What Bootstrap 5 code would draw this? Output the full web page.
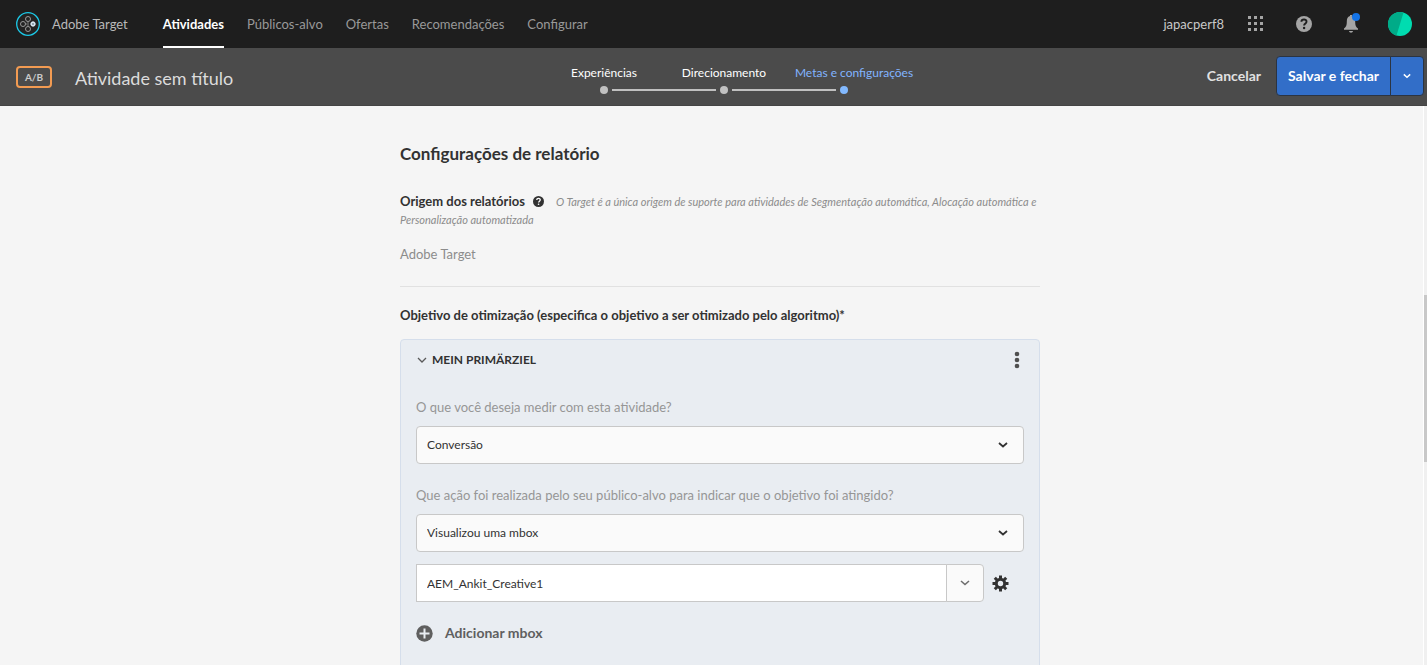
<!DOCTYPE html>
<html lang="pt-BR">
<head>
<meta charset="utf-8">
<meta name="viewport" content="width=device-width, initial-scale=1">
<title>Adobe Target</title>
<link href="https://cdn.jsdelivr.net/npm/bootstrap@5.3.0/dist/css/bootstrap.min.css" rel="stylesheet">
<style>
body{font-family:Lato,"Liberation Sans",sans-serif;font-size:13px;line-height:18px;color:#323232;background:#f5f5f5}
a{text-decoration:none}
.topbar{height:48px;background:#1e1e1e;color:#c8c8c8;padding:0 15px 0 16px;font-size:13px}
.topbar .brand{color:#b9b9b9;margin:0 35px 0 12px}
.topnav{gap:23px}
.topnav .nav-link{padding:0;color:#999;line-height:48px;height:48px}
.topnav .nav-link.active{color:#fff;font-weight:700;box-shadow:inset 0 -2px #fff}
.tools{gap:24px}
.tools .bell{margin-left:7px}
.tools .help{margin-left:8px}
.plain{border:0;background:none;padding:0;color:inherit;display:inline-flex;align-items:center}
.actionbar{height:58px;background:#4b4b4b;border-bottom:1px solid #444;display:grid;grid-template-columns:1fr auto 1fr;align-items:center;padding:0 3px 2px 16px}
.activity{padding-top:2px}
.ab-tag{width:36px;height:22px;border:2px solid #f29b52;border-radius:4px;font-size:10px;font-weight:700;color:#ccc;line-height:18px;text-align:center}
.title-text{font-size:18px;line-height:24px;font-weight:400;color:#dcdcdc;margin:2px 0 0 23px}
.steps{display:grid;grid-template-columns:repeat(3,120px);margin:6px 0 0 8px;padding:0;list-style:none}
.steps li{display:flex;flex-direction:column;align-items:center;white-space:nowrap;position:relative;gap:4px}
.steps a{color:#fff;font-size:12px}
.steps i{width:8px;height:8px;border-radius:50%;background:#c0c0c0}
.steps li+li::before{content:"";position:absolute;left:-52px;width:104px;bottom:3px;height:2px;background:#c0c0c0}
.steps .current a{color:#82b4ff;margin-left:20px}
.steps .current i{background:#82b9ff}
.cancel{font-size:14px;font-weight:700;color:#e1e1e1;margin-right:15px}
.btn-save{--bs-btn-bg:#326ec8;--bs-btn-color:#fff;--bs-btn-border-color:#2b3442;--bs-btn-hover-bg:#2a62b8;--bs-btn-hover-color:#fff;height:40px;font-size:14px;font-weight:700;padding:0 11px;border-radius:4px}
.btn-save.arrow{width:34px;padding:0}
.page{width:640px;max-width:100%;margin:0 auto;padding-top:36px}
.pane{padding-left:17px}
h1{font-size:17px;line-height:24px;font-weight:700;margin:0}
.source{margin-top:26px;font-size:11px;font-style:italic;color:#8c8c8c}
.source h2{display:inline;font-style:normal;color:#323232}
.source svg{margin:0 12px 0 8px;vertical-align:-1px}
.source h2,.goal-title{font-size:13px;line-height:18px;font-weight:700;margin:0}
.muted{color:#8c8c8c}
.rule{border-top:1px solid #e1e1e1;margin:23px 0 19px}
.goal{background:#e9edf2;border:1px solid #d5deeb;border-radius:4px;margin-top:15px;padding:0 15px 80px}
.goal-head{height:40px}
.goal-head .plain{font-size:12px;font-weight:700;color:#323232;gap:5px}
.goal-head .toggle{padding-left:1px}
.goal label{color:#969696;display:block;margin-bottom:10px}
.goal .form-select,.goal .form-control{height:38px;font-size:12px;line-height:18px;border:1px solid #c8c8c8;border-radius:4px;padding:9px 10px;color:#323232;background-color:#fafafa}
.goal .form-select{background-image:url("data:image/svg+xml,%3Csvg xmlns='http://www.w3.org/2000/svg' viewBox='0 0 10 6'%3E%3Cpath d='M1 1l4 3.500 4-3.500' fill='none' stroke='%23323232' stroke-width='1.800'/%3E%3C/svg%3E");background-size:10px 6px;background-position:right 15px center}
.goal .form-control{background:#fff;border-radius:0}
.goal-field{margin-top:22px}
.goal-head+.goal-field{margin-top:18px}
.combo{width:568px;max-width:calc(100% - 40px)}
.combo button{width:38px;margin-left:-1px;border:1px solid #c8c8c8;border-radius:0 4px 4px 0;background:#fafafa;padding:0}
.mbox-row{margin-top:12px}
.add{font-size:14px;font-weight:700;color:#5f5f5f;margin-top:22px;gap:12px}
.track{width:4px;background:#f0f0f0;border-left:1px solid #fff}
.thumb{background:#c8c8c8}
</style>
</head>
<body class="vh-100 d-flex flex-column overflow-hidden">
<header class="topbar d-flex align-items-center flex-shrink-0">
  <svg width="24" height="24" viewBox="0 0 24 24" fill="none"><circle cx="12" cy="12" r="11.300" fill="#222" stroke="#1cc8e6" stroke-width="1.300"/><g stroke="#999"><circle cx="12" cy="7" r="2.500"/><circle cx="7" cy="12" r="2.500"/><circle cx="12" cy="17" r="2.500"/><path d="M12 9.500v5M9.500 12H11" stroke-width=".8"/><circle cx="17" cy="12" r="2.200" fill="#dbe9f4" stroke="#dbe9f4"/></g><circle cx="17" cy="12" r="1" fill="#7d8b96"/></svg>
  <span class="brand">Adobe Target</span>
  <nav class="topnav nav flex-nowrap">
    <a class="nav-link active" href="#">Atividades</a>
    <a class="nav-link" href="#">Públicos-alvo</a>
    <a class="nav-link" href="#">Ofertas</a>
    <a class="nav-link" href="#">Recomendações</a>
    <a class="nav-link" href="#">Configurar</a>
  </nav>
  <div class="tools ms-auto d-flex align-items-center">
    <span>japacperf8</span>
    <button class="plain" aria-label="Aplicativos"><svg width="16" height="16" fill="#a5a5a5"><path d="M0 0h3v3H0zM6 0h3v3H6zM12 0h3v3h-3zM0 6h3v3H0zM6 6h3v3H6zM12 6h3v3h-3zM0 12h3v3H0zM6 12h3v3H6zM12 12h3v3h-3z"/></svg></button>
    <button class="plain help" aria-label="Ajuda"><svg width="16" height="16" viewBox="0 0 16 16"><circle cx="8" cy="8" r="8" fill="#a5a5a5"/><path d="M5.400 5.800C5.500 2.700 10.700 2.800 10.500 5.800c0 1.700-2.400 1.700-2.400 3.800" fill="none" stroke="#1e1e1e" stroke-width="1.900"/><circle cx="8.100" cy="12" r="1.200" fill="#1e1e1e"/></svg></button>
    <button class="plain bell" aria-label="Notificações"><svg width="21" height="22" viewBox="0 0 21 22"><path d="M8 3c3.500.5 4.200 2.800 4.200 5.500 0 4.500 1 5.500 2.800 7v1.200H1v-1.200c1.800-1.500 2.800-2.500 2.800-7C3.800 5.800 4.500 3.500 7 3V2h2v1z" fill="#a5a5a5"/><path d="M6 18h4c-.3 2.300-3.700 2.300-4 0z" fill="#a5a5a5"/><circle cx="13" cy="4" r="4" fill="#1473e6"/></svg></button>
    <button class="plain" aria-label="Perfil"><svg width="24" height="24" viewBox="0 0 24 24"><circle cx="12" cy="12" r="12" fill="#00dcb0"/><path d="M15.500.5A12 12 0 1 0 8.500 23.500z" fill="#00ab88"/></svg></button>
  </div>
</header>
<section class="actionbar flex-shrink-0">
  <div class="activity d-flex align-items-center"><span class="ab-tag">A/B</span><span class="title-text">Atividade sem título</span></div>
  <ol class="steps">
    <li><a href="#">Experiências</a><i></i></li>
    <li><a href="#">Direcionamento</a><i></i></li>
    <li class="current"><a href="#">Metas e configurações</a><i></i></li>
  </ol>
  <div class="d-flex align-items-center justify-content-end">
    <button class="plain cancel">Cancelar</button>
    <div class="btn-group"><button class="btn btn-save">Salvar e fechar</button><button class="btn btn-save arrow" aria-label="Mais opções"><svg class="d-block mx-auto" width="8" height="6" viewBox="0 0 10 6"><path d="M1 1l4 3.500L9 1" fill="none" stroke="#fff" stroke-width="1.800"/></svg></button></div>
  </div>
</section>
<div class="d-flex flex-grow-1 overflow-hidden">
  <main class="pane flex-grow-1 overflow-hidden">
    <div class="page">
      <h1>Configurações de relatório</h1>
      <div class="source"><h2>Origem dos relatórios</h2><svg width="11" height="11" viewBox="0 0 16 16"><circle cx="8" cy="8" r="8" fill="#323232"/><path d="M5.400 5.800C5.500 2.700 10.700 2.800 10.500 5.800c0 1.700-2.400 1.700-2.400 3.800" fill="none" stroke="#fff" stroke-width="1.900"/><circle cx="8.100" cy="12" r="1.200" fill="#fff"/></svg>O Target é a única origem de suporte para atividades de Segmentação automática, Alocação automática e<br>Personalização automatizada</div>
      <div class="muted mt-3">Adobe Target</div>
      <div class="rule"></div>
      <h2 class="goal-title">Objetivo de otimização (especifica o objetivo a ser otimizado pelo algoritmo)*</h2>
      <form class="goal">
        <div class="goal-head d-flex align-items-center justify-content-between">
          <button type="button" class="plain toggle"><svg width="10" height="7" viewBox="0 0 10 7"><path d="M1 1l4 4 4-4" fill="none" stroke="#5a5a5a" stroke-width="1.300"/></svg>MEIN PRIMÄRZIEL</button>
          <button type="button" class="plain" aria-label="Mais"><svg width="14" height="18" fill="#505050"><circle cx="7" cy="3" r="2.300"/><circle cx="7" cy="9" r="2.300"/><circle cx="7" cy="15" r="2.300"/></svg></button>
        </div>
        <div class="goal-field">
          <label for="m">O que você deseja medir com esta atividade?</label>
          <select id="m" class="form-select"><option>Conversão</option></select>
        </div>
        <div class="goal-field">
          <label for="a">Que ação foi realizada pelo seu público-alvo para indicar que o objetivo foi atingido?</label>
          <select id="a" class="form-select"><option>Visualizou uma mbox</option></select>
        </div>
        <div class="mbox-row d-flex align-items-center">
          <div class="combo d-flex"><input class="form-control" aria-label="mbox" value="AEM_Ankit_Creative1"><button type="button" aria-label="Abrir" class="flex-shrink-0"><svg class="d-block mx-auto" width="10" height="6" viewBox="0 0 10 6"><path d="M1 1l4 3.500L9 1" fill="none" stroke="#6e6e6e" stroke-width="1.600"/></svg></button></div>
          <button type="button" class="plain ms-2" aria-label="Configurações"><svg width="17" height="17" viewBox="0 0 17 17"><g stroke="#323232" stroke-width="3"><path d="M8.500.5v3M8.500 13.500v3M.5 8.500h3M13.500 8.500h3M2.800 2.800l2.200 2.200M12 12l2.200 2.200M14.200 2.800L12 5M5 12l-2.200 2.200"/></g><circle cx="8.500" cy="8.500" r="4.200" fill="none" stroke="#323232" stroke-width="3"/></svg></button>
        </div>
        <button type="button" class="plain add"><svg width="17" height="17" viewBox="0 0 17 17"><circle cx="8.500" cy="8.500" r="8.200" fill="#5f5f5f"/><path d="M8.500 3.500v10M3.500 8.500h10" stroke="#e9edf2" stroke-width="2"/></svg>Adicionar mbox</button>
      </form>
    </div>
  </main>
  <div class="track d-flex flex-column" aria-hidden="true"><div style="flex:189"></div><div class="thumb" style="flex:167"></div><div style="flex:203"></div></div>
</div>
<script src="https://cdn.jsdelivr.net/npm/bootstrap@5.3.0/dist/js/bootstrap.bundle.min.js"></script>
</body>
</html>
